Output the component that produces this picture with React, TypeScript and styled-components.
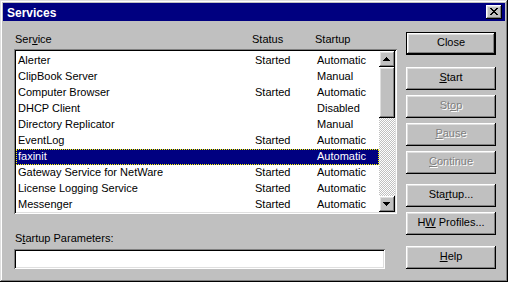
import React from "react";
import styled, { createGlobalStyle, css } from "styled-components";

const GlobalStyle = createGlobalStyle`
  html, body { margin: 0; padding: 0; background: #c0c0c0; }
  body { font-family: "Liberation Sans", Arial, sans-serif; font-size: 11px; }
  * { box-sizing: border-box; }
  #root { width: 508px; height: 282px; }
`;

const raised = css`
  box-shadow: inset -1px -1px #000, inset 1px 1px #fff, inset -2px -2px #808080,
    inset 2px 2px #dfdfdf;
`;

const sunken = css`
  box-shadow: inset 1px 1px #808080, inset -1px -1px #fff, inset 2px 2px #000,
    inset -2px -2px #dfdfdf;
`;

const Window = styled.div`
  width: 508px;
  height: 282px;
  background: #c0c0c0;
  padding: 3px;
  box-shadow: inset -1px -1px #000, inset 1px 1px #dfdfdf, inset -2px -2px #808080,
    inset 2px 2px #fff;
  display: flex;
  flex-direction: column;
  color: #000;
`;

const TitleBar = styled.div`
  height: 18px;
  background: #000080;
  color: #fff;
  display: flex;
  align-items: center;
  justify-content: space-between;
  padding: 0 3px 0 4px;
`;

const TitleText = styled.span`
  font-weight: bold;
  font-size: 12px;
  line-height: 18px;
  padding-top: 1px;
`;

const TitleButton = styled.div`
  width: 16px;
  height: 14px;
  background: #c0c0c0;
  ${raised};
  display: flex;
  align-items: center;
  justify-content: center;
  padding: 0 1px 1px 0;
`;

const Body = styled.div`
  flex: 1;
  display: flex;
  gap: 9px;
  padding: 11px 9px 0 11px;
`;

const LeftCol = styled.div`
  width: 383px;
  display: flex;
  flex-direction: column;
`;

const HeaderRow = styled.div`
  display: grid;
  grid-template-columns: 237px 63px 1fr;
  margin-top: 1px;
  padding-left: 1px;
  height: 13px;
  line-height: 13px;
`;

const ListBox = styled.div`
  margin-top: 3px;
  height: 165px;
  padding: 2px;
  background: #fff;
  ${sunken};
  display: flex;
`;

const Rows = styled.div`
  flex: 1;
  padding-top: 2px;
  overflow: hidden;
  background: #fff;
`;

const Row = styled.div<{ $selected?: boolean }>`
  display: grid;
  grid-template-columns: 237px 62px 1fr;
  height: 16px;
  line-height: 15px;
  padding-left: 2px;
  white-space: nowrap;
  ${(p) =>
    p.$selected &&
    css`
      background: #000080;
      color: #fff;
      outline: 1px dotted #ffff00;
      outline-offset: -1px;
    `}
`;

const ScrollBar = styled.div`
  width: 16px;
  display: flex;
  flex-direction: column;
`;

const ScrollButton = styled.div`
  width: 16px;
  height: 16px;
  background: #c0c0c0;
  ${raised};
  display: flex;
  align-items: center;
  justify-content: center;
  padding: 0 1px 1px 0;
`;

const Thumb = styled.div`
  width: 16px;
  height: 51px;
  background: #c0c0c0;
  ${raised};
`;

const Track = styled.div`
  flex: 1;
  background-color: #c0c0c0;
  background-image: conic-gradient(#fff 25%, #c0c0c0 0 50%, #fff 0 75%, #c0c0c0 0);
  background-size: 2px 2px;
`;

const ParamLabel = styled.div`
  margin-top: 18px;
  padding-left: 1px;
  height: 13px;
  line-height: 13px;
`;

const ParamInput = styled.div`
  margin-top: 4px;
  width: 371px;
  height: 20px;
  background: #fff;
  ${sunken};
`;

const RightCol = styled.div`
  width: 90px;
  display: flex;
  flex-direction: column;
`;

const Button = styled.button<{ $mt?: number; $default?: boolean; $disabled?: boolean }>`
  width: 90px;
  height: 23px;
  margin-top: ${(p) => p.$mt ?? 0}px;
  border: none;
  background: #c0c0c0;
  font-family: "Liberation Sans", Arial, sans-serif;
  font-size: 11px;
  line-height: 13px;
  padding: 0 0 2px;
  color: ${(p) => (p.$disabled ? "#808080" : "#000")};
  text-shadow: ${(p) => (p.$disabled ? "1px 1px 0 #fff" : "none")};
  ${(p) =>
    p.$default
      ? css`
          box-shadow: inset 0 0 0 1px #000, inset -2px -2px #000, inset 2px 2px #fff,
            inset -3px -3px #808080, inset 3px 3px #dfdfdf;
        `
      : raised};
`;

const CloseGlyph = () => (
  <svg width="8" height="7" viewBox="0 0 8 7" shapeRendering="crispEdges">
    <path
      fill="#000"
      d="M0 0h2v1H0zM6 0h2v1H6zM1 1h2v1H1zM5 1h2v1H5zM2 2h4v1H2zM3 3h2v1H3zM2 4h4v1H2zM1 5h2v1H1zM5 5h2v1H5zM0 6h2v1H0zM6 6h2v1H6z"
    />
  </svg>
);

const Arrow = ({ down }: { down?: boolean }) => (
  <svg width="7" height="4" viewBox="0 0 7 4" shapeRendering="crispEdges">
    <path
      fill="#000"
      d={
        down
          ? "M0 0h7v1H0zM1 1h5v1H1zM2 2h3v1H2zM3 3h1v1H3z"
          : "M3 0h1v1H3zM2 1h3v1H2zM1 2h5v1H1zM0 3h7v1H0z"
      }
    />
  </svg>
);

const services: [string, string, string][] = [
  ["Alerter", "Started", "Automatic"],
  ["ClipBook Server", "", "Manual"],
  ["Computer Browser", "Started", "Automatic"],
  ["DHCP Client", "", "Disabled"],
  ["Directory Replicator", "", "Manual"],
  ["EventLog", "Started", "Automatic"],
  ["faxinit", "", "Automatic"],
  ["Gateway Service for NetWare", "Started", "Automatic"],
  ["License Logging Service", "Started", "Automatic"],
  ["Messenger", "Started", "Automatic"],
];

export default function App() {
  return (
    <>
      <GlobalStyle />
      <Window>
        <TitleBar>
          <TitleText>Services</TitleText>
          <TitleButton>
            <CloseGlyph />
          </TitleButton>
        </TitleBar>
        <Body>
          <LeftCol>
            <HeaderRow>
              <span>
                Ser<u>v</u>ice
              </span>
              <span>Status</span>
              <span>Startup</span>
            </HeaderRow>
            <ListBox>
              <Rows>
                {services.map(([name, status, startup]) => (
                  <Row key={name} $selected={name === "faxinit"}>
                    <span>{name}</span>
                    <span>{status}</span>
                    <span>{startup}</span>
                  </Row>
                ))}
              </Rows>
              <ScrollBar>
                <ScrollButton>
                  <Arrow />
                </ScrollButton>
                <Thumb />
                <Track />
                <ScrollButton>
                  <Arrow down />
                </ScrollButton>
              </ScrollBar>
            </ListBox>
            <ParamLabel>
              S<u>t</u>artup Parameters:
            </ParamLabel>
            <ParamInput />
          </LeftCol>
          <RightCol>
            <Button $default>Close</Button>
            <Button $mt={12}>
              <u>S</u>tart
            </Button>
            <Button $mt={5} $disabled>
              St<u>o</u>p
            </Button>
            <Button $mt={5} $disabled>
              <u>P</u>ause
            </Button>
            <Button $mt={5} $disabled>
              <u>C</u>ontinue
            </Button>
            <Button $mt={10}>
              Sta<u>r</u>tup...
            </Button>
            <Button $mt={5}>
              H<u>W</u> Profiles...
            </Button>
            <Button $mt={11}>
              <u>H</u>elp
            </Button>
          </RightCol>
        </Body>
      </Window>
    </>
  );
}
